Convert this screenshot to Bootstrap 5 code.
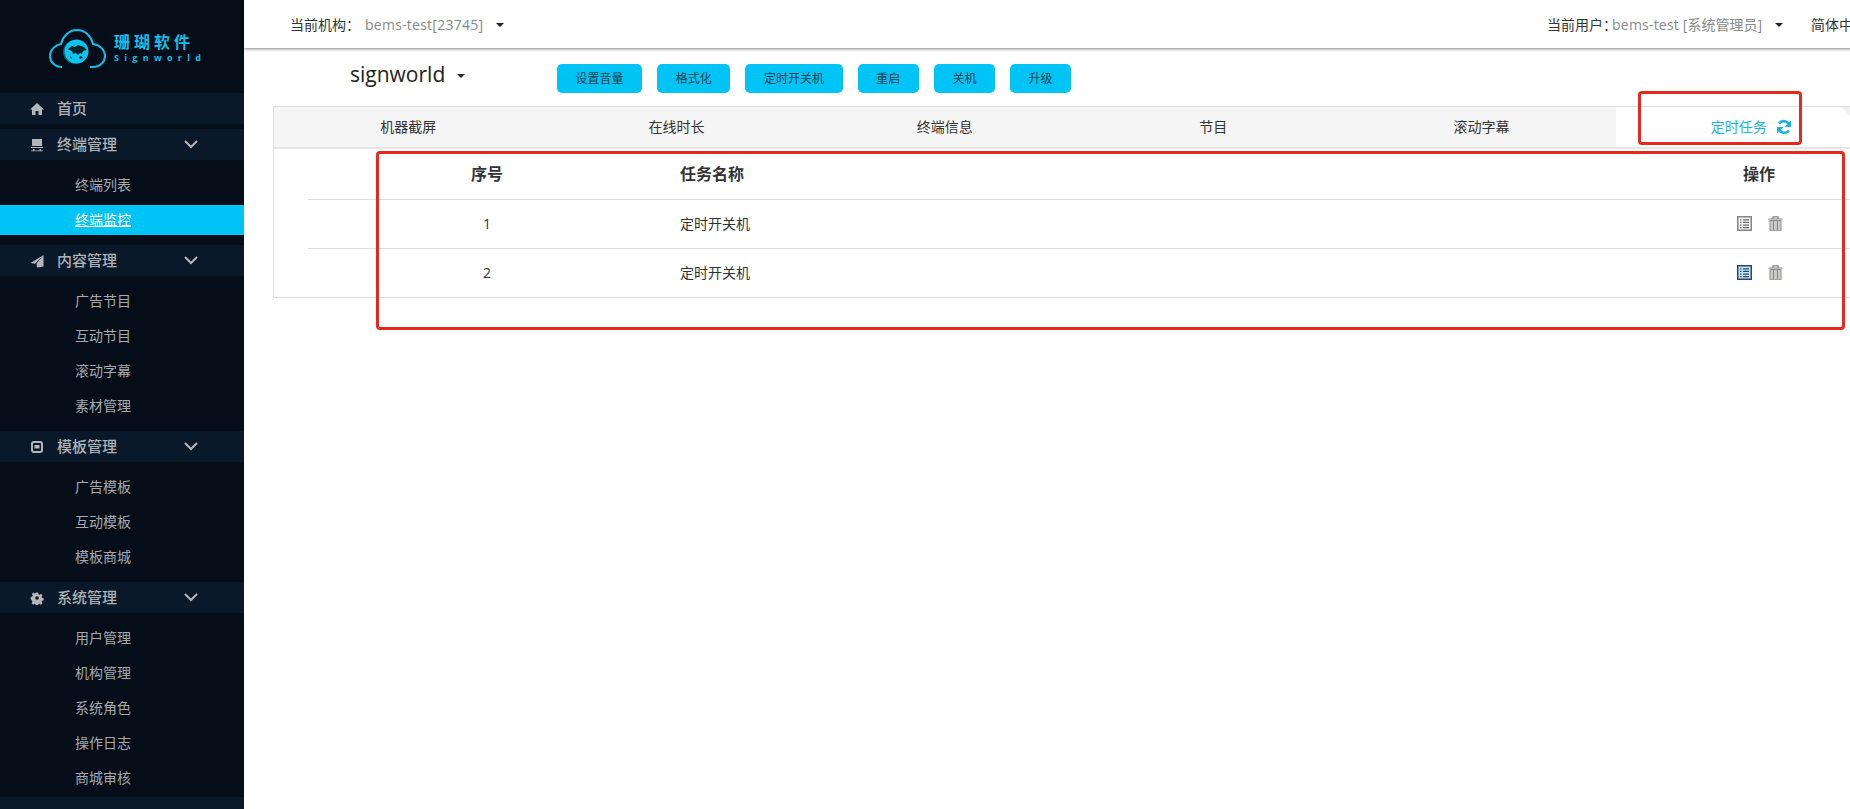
<!DOCTYPE html>
<html lang="zh-CN">
<head>
<meta charset="utf-8">
<title>终端监控</title>
<link href="https://cdn.jsdelivr.net/npm/bootstrap@5.3.0/dist/css/bootstrap.min.css" rel="stylesheet">
<style>
html,body{height:100%;overflow:hidden;background:#fff}
body{font-family:"Open Sans","Noto Sans CJK SC",sans-serif;font-size:14px;color:#333}
.shell{width:1850px;height:809px;overflow:hidden;position:relative}
.side{width:244px;height:809px;background:#050d18;flex:none;overflow:hidden;color:#a9adb1}
.logo-box{height:93px;padding:29px 0 0 49px}
.logo-svg{flex:none;margin-right:8px}
.logo-cn{color:#0fc0ea;font-size:16px;font-weight:700;letter-spacing:4px;line-height:17px;white-space:nowrap;margin-top:5px}
.logo-en{color:#0fc0ea;font-size:9px;font-weight:700;letter-spacing:5.300px;line-height:11px;margin-top:1px}
.band{height:31px;background:#0a1929;margin-bottom:5px;padding:0 46px 0 30px;font-size:15px;font-weight:500;color:#b0b3b6}
.band.tight{margin-bottom:0}
.band-icon{width:14px;margin-right:13px;flex:none;fill:#b4b6b9}
.chev{width:14px;height:9px;fill:none;stroke:#b4b6b9;stroke-width:2}
.subs{list-style:none;margin:0;padding:10px 0}
.subs li{height:30px;line-height:30px;padding-left:75px;margin-bottom:5px;color:#a6aaae}
.subs li:last-child{margin-bottom:0}
.subs li.now{background:#00c4f5;color:#fff;text-decoration:underline}
.band-last{height:12px;margin-top:-6px;background:#0a1929}
.work{width:1670px;flex:none}
.topbar{height:48px;box-shadow:0 1px 3px rgba(0,0,0,.5);padding:0 26px 0 46px;color:#333}
.lab-a{width:71px;flex:none;white-space:nowrap}
.lab-b{width:65px;flex:none;white-space:nowrap}
.muted-name{color:#888;white-space:nowrap}
.val-a{letter-spacing:.25px}
.val-b{letter-spacing:.2px}
.cap{color:#222}
.cap.dropdown-toggle::after{margin-left:13px;vertical-align:.15em}
.tool-row{height:58px;padding:16px 0 0 106px}
.dev-name{font-size:21px;color:#222;width:207px;line-height:28px;margin-top:-4px}
.dev-name.dropdown-toggle::after{font-size:14px;margin-left:12px}
.act-row{gap:15px}
.act-btn{background:#00c4f5;border:0;border-radius:5px;color:#22424e;font-size:12px;height:29px;padding:0 18.6px;line-height:29px;white-space:nowrap}
.act-btn:hover{background:#00c4f5;color:#22424e}
.sheet{margin:0 29px;border:1px solid #ddd;height:192px}
.tab-strip{height:42px;background:#f5f5f5;border-bottom:2px solid #e6e6e4;flex-wrap:nowrap}
.tab-strip .nav-link{color:#333;padding:0;line-height:40px;border-radius:0}
.tab-strip .nav-link.active{background:#fff;color:#18b4dc;padding-left:95px;text-align:left}
.spin{width:16px;height:16px;margin-left:9px;vertical-align:-3px}
.task-wrap{padding:0 34px}
.task-tbl{margin:0;table-layout:fixed;width:100%}
.task-tbl th,.task-tbl td{padding:0;vertical-align:middle;border-color:#dcdcdc;color:#333}
.task-tbl thead tr{height:50px}
.task-tbl tbody tr{height:49px}
.task-tbl tbody tr:last-child td{border-bottom:0}
.task-tbl th{font-size:16px;font-weight:700}
.c-no{width:358px;text-align:center}
.c-name{padding-left:14px!important}
.c-op{width:184px;text-align:center;padding-left:2px!important}
.op-set{padding-left:2px}
.op-ico{width:15px;height:15px;display:block}
.mark-box{position:absolute;border:3px solid #e8281f;border-radius:4px;pointer-events:none}
.mark-a{left:1638px;top:91px;width:164px;height:54px}
.mark-b{left:376px;top:151px;width:1469px;height:179px}
.fold{position:absolute;left:1841px;top:107px;width:0;height:0;border-top:9px solid #f0f0f0;border-left:9px solid transparent}
</style>
</head>
<body>
<div class="shell d-flex">
  <aside class="side">
    <div class="logo-box d-flex">
      <svg class="logo-svg" width="57" height="40" viewBox="0 0 57 40">
        <path d="M13 38C6 38 1 33 1 27c0-6 5-11 11-12C14 7 20 1 28 1c8 0 14 6 16 14 7 1 12 6 12 12 0 6-5 11-12 11h-3" fill="none" stroke="#0fc0ea" stroke-width="2"/>
        <circle cx="26" cy="23" r="12" fill="#0a5a78"/>
        <circle cx="27.500" cy="22.500" r="12" fill="#0cc4f0"/>
        <path d="M19 20l4-3 3 1 3-2 6 2 3 3-4 1-1 3-2-1-2 2-2-2-3 1-1-3-3-1zM30 28l2-1 2 2-3 1zM21 27l2 2-1 1z" fill="#06222f"/>
      </svg>
      <div>
        <div class="logo-cn">珊瑚软件</div>
        <div class="logo-en">Signworld</div>
      </div>
    </div>
    <div class="band d-flex align-items-center">
      <svg class="band-icon" viewBox="0 0 14 14" height="14"><path d="M7 1L0 7.500h2V13h3.500V9h3v4H12V7.500h2z"/></svg>首页
    </div>
    <div class="band tight d-flex align-items-center">
      <svg class="band-icon" viewBox="0 0 14 14" height="14"><path d="M2 1h10v7H2zM1 9h12v1H1zM3 11h1.500v2H3zM9.500 11H11v2H9.500zM1 12.500h12v.8H1z"/></svg>终端管理
      <svg class="chev ms-auto" viewBox="0 0 14 9"><path d="M1 1l6 6 6-6"/></svg>
    </div>
    <ul class="subs">
      <li>终端列表</li>
      <li class="now">终端监控</li>
    </ul>
    <div class="band tight d-flex align-items-center">
      <svg class="band-icon" viewBox="0 0 14 14" height="14"><path d="M13.500 1L.5 9l4.500.8zM13.500 1L6.500 9.500 7 13.500l6.500-1z"/></svg>内容管理
      <svg class="chev ms-auto" viewBox="0 0 14 9"><path d="M1 1l6 6 6-6"/></svg>
    </div>
    <ul class="subs">
      <li>广告节目</li><li>互动节目</li><li>滚动字幕</li><li>素材管理</li>
    </ul>
    <div class="band tight d-flex align-items-center">
      <svg class="band-icon" viewBox="0 0 14 14" height="14"><path fill-rule="evenodd" d="M4 1h6a3 3 0 0 1 3 3v6a3 3 0 0 1-3 3H4a3 3 0 0 1-3-3V4a3 3 0 0 1 3-3zm0 2a1 1 0 0 0-1 1v6a1 1 0 0 0 1 1h6a1 1 0 0 0 1-1V4a1 1 0 0 0-1-1zm.5 2h5v3.500h-5z"/></svg>模板管理
      <svg class="chev ms-auto" viewBox="0 0 14 9"><path d="M1 1l6 6 6-6"/></svg>
    </div>
    <ul class="subs">
      <li>广告模板</li><li>互动模板</li><li>模板商城</li>
    </ul>
    <div class="band tight d-flex align-items-center">
      <svg class="band-icon" viewBox="0 0 14 14" height="14"><path fill-rule="evenodd" d="M5.800 1h2.400l.4 1.800 1.200.5 1.600-1 1.700 1.700-1 1.600.5 1.200 1.800.4v2.400l-1.800.4-.5 1.200 1 1.600-1.700 1.700-1.600-1-1.200.5-.4 1.800H5.800l-.4-1.800-1.200-.5-1.600 1-1.700-1.700 1-1.600-.5-1.200L0 8.200V5.800l1.800-.4.500-1.200-1-1.600L3 .9l1.600 1 1.200-.5zM7 5a2 2 0 1 0 0 4 2 2 0 0 0 0-4z" transform="translate(.7 .7) scale(.9)"/></svg>系统管理
      <svg class="chev ms-auto" viewBox="0 0 14 9"><path d="M1 1l6 6 6-6"/></svg>
    </div>
    <ul class="subs">
      <li>用户管理</li><li>机构管理</li><li>系统角色</li><li>操作日志</li><li>商城审核</li>
    </ul>
    <div class="band-last"></div>
  </aside>

  <main class="work">
    <header class="topbar d-flex align-items-center">
      <span class="lab-a">当前机构：</span><span class="muted-name val-a ms-1">bems-test[23745]</span>
      <a class="cap dropdown-toggle" role="button"></a>
      <div class="ms-auto d-flex align-items-center">
        <span class="lab-b">当前用户：</span><span class="muted-name"><span class="val-b">bems-test </span>[系统管理员]</span>
        <a class="cap dropdown-toggle" role="button"></a>
        <span class="ms-4 ps-1">简体中文</span>
        <a class="cap dropdown-toggle" role="button"></a>
      </div>
    </header>
    <div class="tool-row d-flex align-items-start">
      <a class="dev-name dropdown-toggle text-decoration-none" role="button">signworld</a>
      <div class="act-row d-flex">
        <button class="btn act-btn" type="button">设置音量</button>
        <button class="btn act-btn" type="button">格式化</button>
        <button class="btn act-btn" type="button">定时开关机</button>
        <button class="btn act-btn" type="button">重启</button>
        <button class="btn act-btn" type="button">关机</button>
        <button class="btn act-btn" type="button">升级</button>
      </div>
    </div>
    <section class="sheet">
      <ul class="nav nav-justified tab-strip">
        <li class="nav-item"><a class="nav-link" href="#">机器截屏</a></li>
        <li class="nav-item"><a class="nav-link" href="#">在线时长</a></li>
        <li class="nav-item"><a class="nav-link" href="#">终端信息</a></li>
        <li class="nav-item"><a class="nav-link" href="#">节目</a></li>
        <li class="nav-item"><a class="nav-link" href="#">滚动字幕</a></li>
        <li class="nav-item"><a class="nav-link active" href="#">定时任务<svg class="spin" viewBox="0 0 16 16" fill="none" stroke="#18b4dc" stroke-width="2.600"><path d="M13.500 6.500A6 6 0 0 0 3 4.500"/><path d="M2.500 9.500A6 6 0 0 0 13 11.500"/><path d="M15 1.500V8H8.500z" fill="#18b4dc" stroke="none"/><path d="M1 14.500V8h6.500z" fill="#18b4dc" stroke="none"/></svg></a></li>
      </ul>
      <div class="task-wrap">
        <table class="table task-tbl">
          <thead>
            <tr><th class="c-no">序号</th><th class="c-name">任务名称</th><th class="c-op">操作</th></tr>
          </thead>
          <tbody>
            <tr>
              <td class="c-no">1</td><td class="c-name">定时开关机</td>
              <td class="c-op"><div class="op-set d-flex justify-content-center gap-3">
                <svg class="op-ico" viewBox="0 0 15 15"><rect x=".75" y=".75" width="13.500" height="13.500" fill="#f1f1f1" stroke="#868686" stroke-width="1.500"/><path d="M3 3.200h1.500v1.300H3zM6 3.200h6v1.300H6zM3 5.800h1.500v1.300H3zM6 5.800h6v1.300H6zM3 8.400h1.500v1.300H3zM6 8.400h6v1.300H6zM3 11h1.500v1.300H3zM6 11h6v1.300H6z" fill="#6e6e6e"/></svg>
                <svg class="op-ico" viewBox="0 0 15 15"><path d="M.5 3h14M5 3V.8h5V3" fill="none" stroke="#857f7f" stroke-width="1.200"/><rect x="2" y="4.500" width="11" height="10.500" fill="#cfcbcb" stroke="#8f8a8a"/><path d="M5.500 5v9.500M9.500 5v9.500" stroke="#8f8a8a" stroke-width="1.200"/></svg>
              </div></td>
            </tr>
            <tr>
              <td class="c-no">2</td><td class="c-name">定时开关机</td>
              <td class="c-op"><div class="op-set d-flex justify-content-center gap-3">
                <svg class="op-ico" viewBox="0 0 15 15"><rect x=".75" y=".75" width="13.500" height="13.500" fill="#cfe1ee" stroke="#1d4a6e" stroke-width="1.500"/><path d="M3 3.200h1.500v1.300H3zM6 3.200h6v1.300H6zM3 5.800h1.500v1.300H3zM6 5.800h6v1.300H6zM3 8.400h1.500v1.300H3zM6 8.400h6v1.300H6zM3 11h1.500v1.300H3zM6 11h6v1.300H6z" fill="#1d4a6e"/></svg>
                <svg class="op-ico" viewBox="0 0 15 15"><path d="M.5 3h14M5 3V.8h5V3" fill="none" stroke="#857f7f" stroke-width="1.200"/><rect x="2" y="4.500" width="11" height="10.500" fill="#cfcbcb" stroke="#8f8a8a"/><path d="M5.500 5v9.500M9.500 5v9.500" stroke="#8f8a8a" stroke-width="1.200"/></svg>
              </div></td>
            </tr>
          </tbody>
        </table>
      </div>
    </section>
  </main>
  <div class="fold"></div>
  <div class="mark-box mark-a"></div>
  <div class="mark-box mark-b"></div>
</div>
<script src="https://cdn.jsdelivr.net/npm/bootstrap@5.3.0/dist/js/bootstrap.bundle.min.js"></script>
</body>
</html>
